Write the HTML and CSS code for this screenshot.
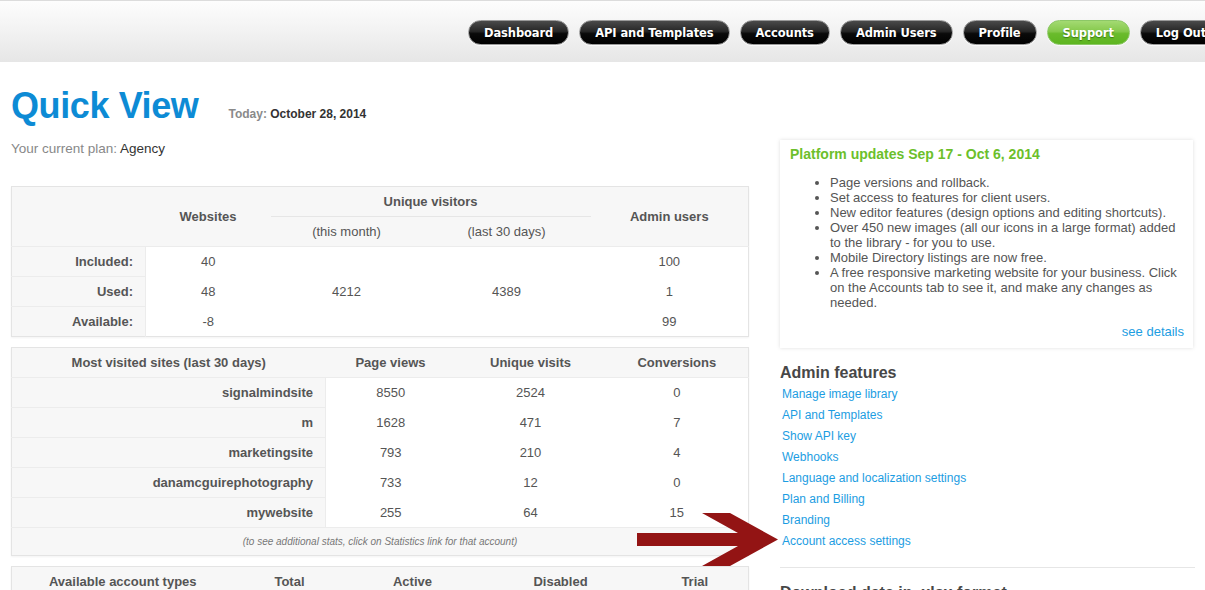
FILE: index.html
```html
<!DOCTYPE html>
<html lang="en">
<head>
<meta charset="utf-8">
<title>Quick View</title>
<link rel="stylesheet" href="styles.css">
</head>
<body>
<header class="topbar">
  <nav class="nav">
    <a class="btn" href="#">Dashboard</a>
    <a class="btn" href="#">API and Templates</a>
    <a class="btn" href="#">Accounts</a>
    <a class="btn" href="#">Admin Users</a>
    <a class="btn" href="#">Profile</a>
    <a class="btn btn-green" href="#">Support</a>
    <a class="btn" href="#">Log Out</a>
  </nav>
</header>

<main class="page">
  <div class="title-row">
    <h1 class="title">Quick View</h1>
    <div class="today">Today: <span class="today-date">October 28, 2014</span></div>
  </div>

  <div class="columns">
    <section class="left">
      <p class="plan">Your current plan: <span class="plan-name">Agency</span></p>

      <table class="stats stats-usage">
        <colgroup>
          <col class="c-134"><col class="c-125"><col class="c-152"><col class="c-168"><col>
        </colgroup>
        <thead>
          <tr>
            <th rowspan="2" class="corner"></th>
            <th rowspan="2">Websites</th>
            <th colspan="2" class="group">Unique visitors</th>
            <th rowspan="2">Admin users</th>
          </tr>
          <tr>
            <th class="sub">(this month)</th>
            <th class="sub">(last 30 days)</th>
          </tr>
        </thead>
        <tbody>
          <tr>
            <th class="label">Included:</th>
            <td>40</td>
            <td rowspan="3">4212</td>
            <td rowspan="3">4389</td>
            <td>100</td>
          </tr>
          <tr>
            <th class="label">Used:</th>
            <td>48</td>
            <td>1</td>
          </tr>
          <tr>
            <th class="label last">Available:</th>
            <td>-8</td>
            <td>99</td>
          </tr>
        </tbody>
      </table>

      <table class="stats stats-sites">
        <colgroup>
          <col class="c-314"><col class="c-130"><col class="c-150"><col>
        </colgroup>
        <thead>
          <tr>
            <th>Most visited sites (last 30 days)</th>
            <th>Page views</th>
            <th>Unique visits</th>
            <th>Conversions</th>
          </tr>
        </thead>
        <tbody>
          <tr><th class="label">signalmindsite</th><td>8550</td><td>2524</td><td>0</td></tr>
          <tr><th class="label">m</th><td>1628</td><td>471</td><td>7</td></tr>
          <tr><th class="label">marketingsite</th><td>793</td><td>210</td><td>4</td></tr>
          <tr><th class="label">danamcguirephotography</th><td>733</td><td>12</td><td>0</td></tr>
          <tr><th class="label">mywebsite</th><td>255</td><td>64</td><td>15</td></tr>
        </tbody>
        <tfoot>
          <tr><td colspan="4" class="note">(to see additional stats, click on Statistics link for that account)</td></tr>
        </tfoot>
      </table>

      <table class="stats stats-types">
        <colgroup>
          <col class="c-222"><col class="c-112"><col class="c-134"><col class="c-162"><col>
        </colgroup>
        <thead>
          <tr>
            <th>Available account types</th>
            <th>Total</th>
            <th>Active</th>
            <th>Disabled</th>
            <th>Trial</th>
          </tr>
        </thead>
      </table>
    </section>

    <aside class="right">
      <div class="updates">
        <h3 class="updates-title">Platform updates Sep 17 - Oct 6, 2014</h3>
        <ul class="updates-list">
          <li>Page versions and rollback.</li>
          <li>Set access to features for client users.</li>
          <li>New editor features (design options and editing shortcuts).</li>
          <li>Over 450 new images (all our icons in a large format) added to the library - for you to use.</li>
          <li>Mobile Directory listings are now free.</li>
          <li>A free responsive marketing website for your business. Click on the Accounts tab to see it, and make any changes as needed.</li>
        </ul>
        <div class="see"><a href="#">see details</a></div>
      </div>

      <h2 class="side-heading">Admin features</h2>
      <ul class="feature-links">
        <li><a href="#">Manage image library</a></li>
        <li><a href="#">API and Templates</a></li>
        <li><a href="#">Show API key</a></li>
        <li><a href="#">Webhooks</a></li>
        <li><a href="#">Language and localization settings</a></li>
        <li><a href="#">Plan and Billing</a></li>
        <li><a href="#">Branding</a></li>
        <li><a href="#">Account access settings</a></li>
      </ul>
      <hr class="divider">
      <h2 class="side-heading download">Download data in .xlsx format</h2>
    </aside>
  </div>

  <svg class="arrow" width="142" height="56" viewBox="0 0 142 56" aria-hidden="true">
    <polygon points="0,21 101,21 65,1 93,1 141,27.5 93,54 65,54 101,34 0,34" fill="#931414"/>
  </svg>
</main>
</body>
</html>
```

FILE: styles.css
```css
html, body {
  margin: 0;
  padding: 0;
  overflow: hidden;
  background: #fff;
  font-family: "Liberation Sans", Arial, sans-serif;
  color: #555;
}

/* Top bar */
.topbar {
  height: 62px;
  box-sizing: border-box;
  border-top: 1px solid #dcdcdc;
  background: linear-gradient(#fdfdfd 0%, #f3f3f3 45%, #e6e6e6 100%);
  padding: 19px 0 0 468px;
}

.nav {
  display: flex;
  gap: 10px;
  white-space: nowrap;
}

.btn {
  display: block;
  height: 25px;
  line-height: 24px;
  box-sizing: border-box;
  padding: 0 15px;
  border-radius: 13px;
  font-family: "DejaVu Sans", Verdana, sans-serif;
  font-weight: bold;
  font-size: 11.5px;
  letter-spacing: -0.1px;
  color: #fff;
  text-decoration: none;
  text-shadow: 0 1px 1px #000;
  background: linear-gradient(#4a4a4a 0%, #262626 45%, #0a0a0a 55%, #000 100%);
  border: 1px solid #9a9a9a;
  box-shadow: 0 1px 1px rgba(255,255,255,.8);
}

.btn-green {
  background: linear-gradient(#a3da72 0%, #86c94d 45%, #6abb2c 55%, #5db520 100%);
  border-color: #8cc866;
  text-shadow: 0 1px 1px #3d7a12;
}

/* Page */
.page {
  position: relative;
  padding: 26px 10px 0 11px;
}

.title-row {
  display: flex;
  align-items: baseline;
}

.title {
  margin: 0;
  font-size: 36px;
  line-height: 36px;
  font-weight: bold;
  color: #0d8bd5;
  letter-spacing: -0.4px;
}

.today {
  margin-left: 30px;
  font-size: 12px;
  font-weight: bold;
  color: #8a8a8a;
}

.today-date {
  color: #333;
}

.columns {
  display: flex;
  gap: 31px;
  margin-top: 16px;
  align-items: flex-start;
}

.left {
  width: 738px;
  flex: none;
}

.right {
  width: 415px;
  flex: none;
}

.plan {
  margin: 0 0 28px;
  font-size: 13.5px;
  line-height: 18px;
  color: #888;
}

.plan-name {
  color: #333;
}

/* Tables */
.stats {
  width: 100%;
  table-layout: fixed;
  border-collapse: collapse;
  border: 1px solid #e4e4e4;
  box-shadow: 0 1px 2px rgba(0,0,0,.05);
  margin-bottom: 10px;
  font-size: 13px;
  color: #555;
}

.c-134 { width: 134px; }
.c-125 { width: 125px; }
.c-152 { width: 152px; }
.c-168 { width: 168px; }
.c-314 { width: 314px; }
.c-130 { width: 130px; }
.c-150 { width: 150px; }
.c-222 { width: 222px; }
.c-112 { width: 112px; }
.c-162 { width: 162px; }

.stats th,
.stats td {
  height: 29px;
  padding: 0;
  text-align: center;
  vertical-align: middle;
}

.stats thead th {
  background: #f7f7f7;
  font-weight: bold;
}

.stats-usage thead tr:last-child th {
  border-bottom: 1px solid #ececec;
}

.stats-usage thead th[rowspan] {
  border-bottom: 1px solid #ececec;
}

.stats .group {
  border-bottom: 1px solid #e6e6e6;
}

.stats .sub {
  font-weight: normal;
}

.stats .label {
  background: #f7f7f7;
  text-align: right;
  padding-right: 12px;
  font-weight: bold;
  border-right: 1px solid #ececec;
  border-bottom: 1px solid #ececec;
}

.stats .label.last {
  border-bottom: none;
}

.stats-sites thead th {
  border-bottom: 1px solid #ececec;
}

.stats-sites tbody td {
  background: #fff;
}

.stats .note {
  height: 27px;
  background: #f7f7f7;
  font-size: 10px;
  font-style: italic;
  color: #777;
  border-top: 1px solid #ececec;
}

/* Right column */
.updates {
  background: #fff;
  box-shadow: 0 0 4px rgba(0,0,0,.13);
  padding: 6px 9px 9px 10px;
  margin-right: 2px;
}

.updates-title {
  margin: 0;
  font-size: 14px;
  line-height: 16px;
  font-weight: bold;
  color: #6cbf2b;
}

.updates-list {
  margin: 13px 0 0;
  padding-left: 40px;
  font-size: 13px;
  line-height: 15px;
  color: #555;
}

.see {
  margin-top: 14px;
  text-align: right;
  font-size: 13px;
  line-height: 15px;
}

.see a,
.feature-links a {
  color: #1c9de2;
  text-decoration: none;
}

.side-heading {
  margin: 15px 0 0;
  font-size: 16px;
  line-height: 20px;
  font-weight: bold;
  color: #474747;
}

.feature-links {
  list-style: none;
  margin: 1px 0 0;
  padding: 0 0 0 2px;
  font-size: 12px;
  line-height: 21px;
}

.divider {
  margin: 15px 0 0;
  border: 0;
  border-top: 1px solid #e6e6e6;
  height: 0;
}

.side-heading.download {
  margin-top: 15px;
}

/* Annotation arrow over content */
.arrow {
  position: absolute;
  left: 637px;
  top: 450px;
}
```
